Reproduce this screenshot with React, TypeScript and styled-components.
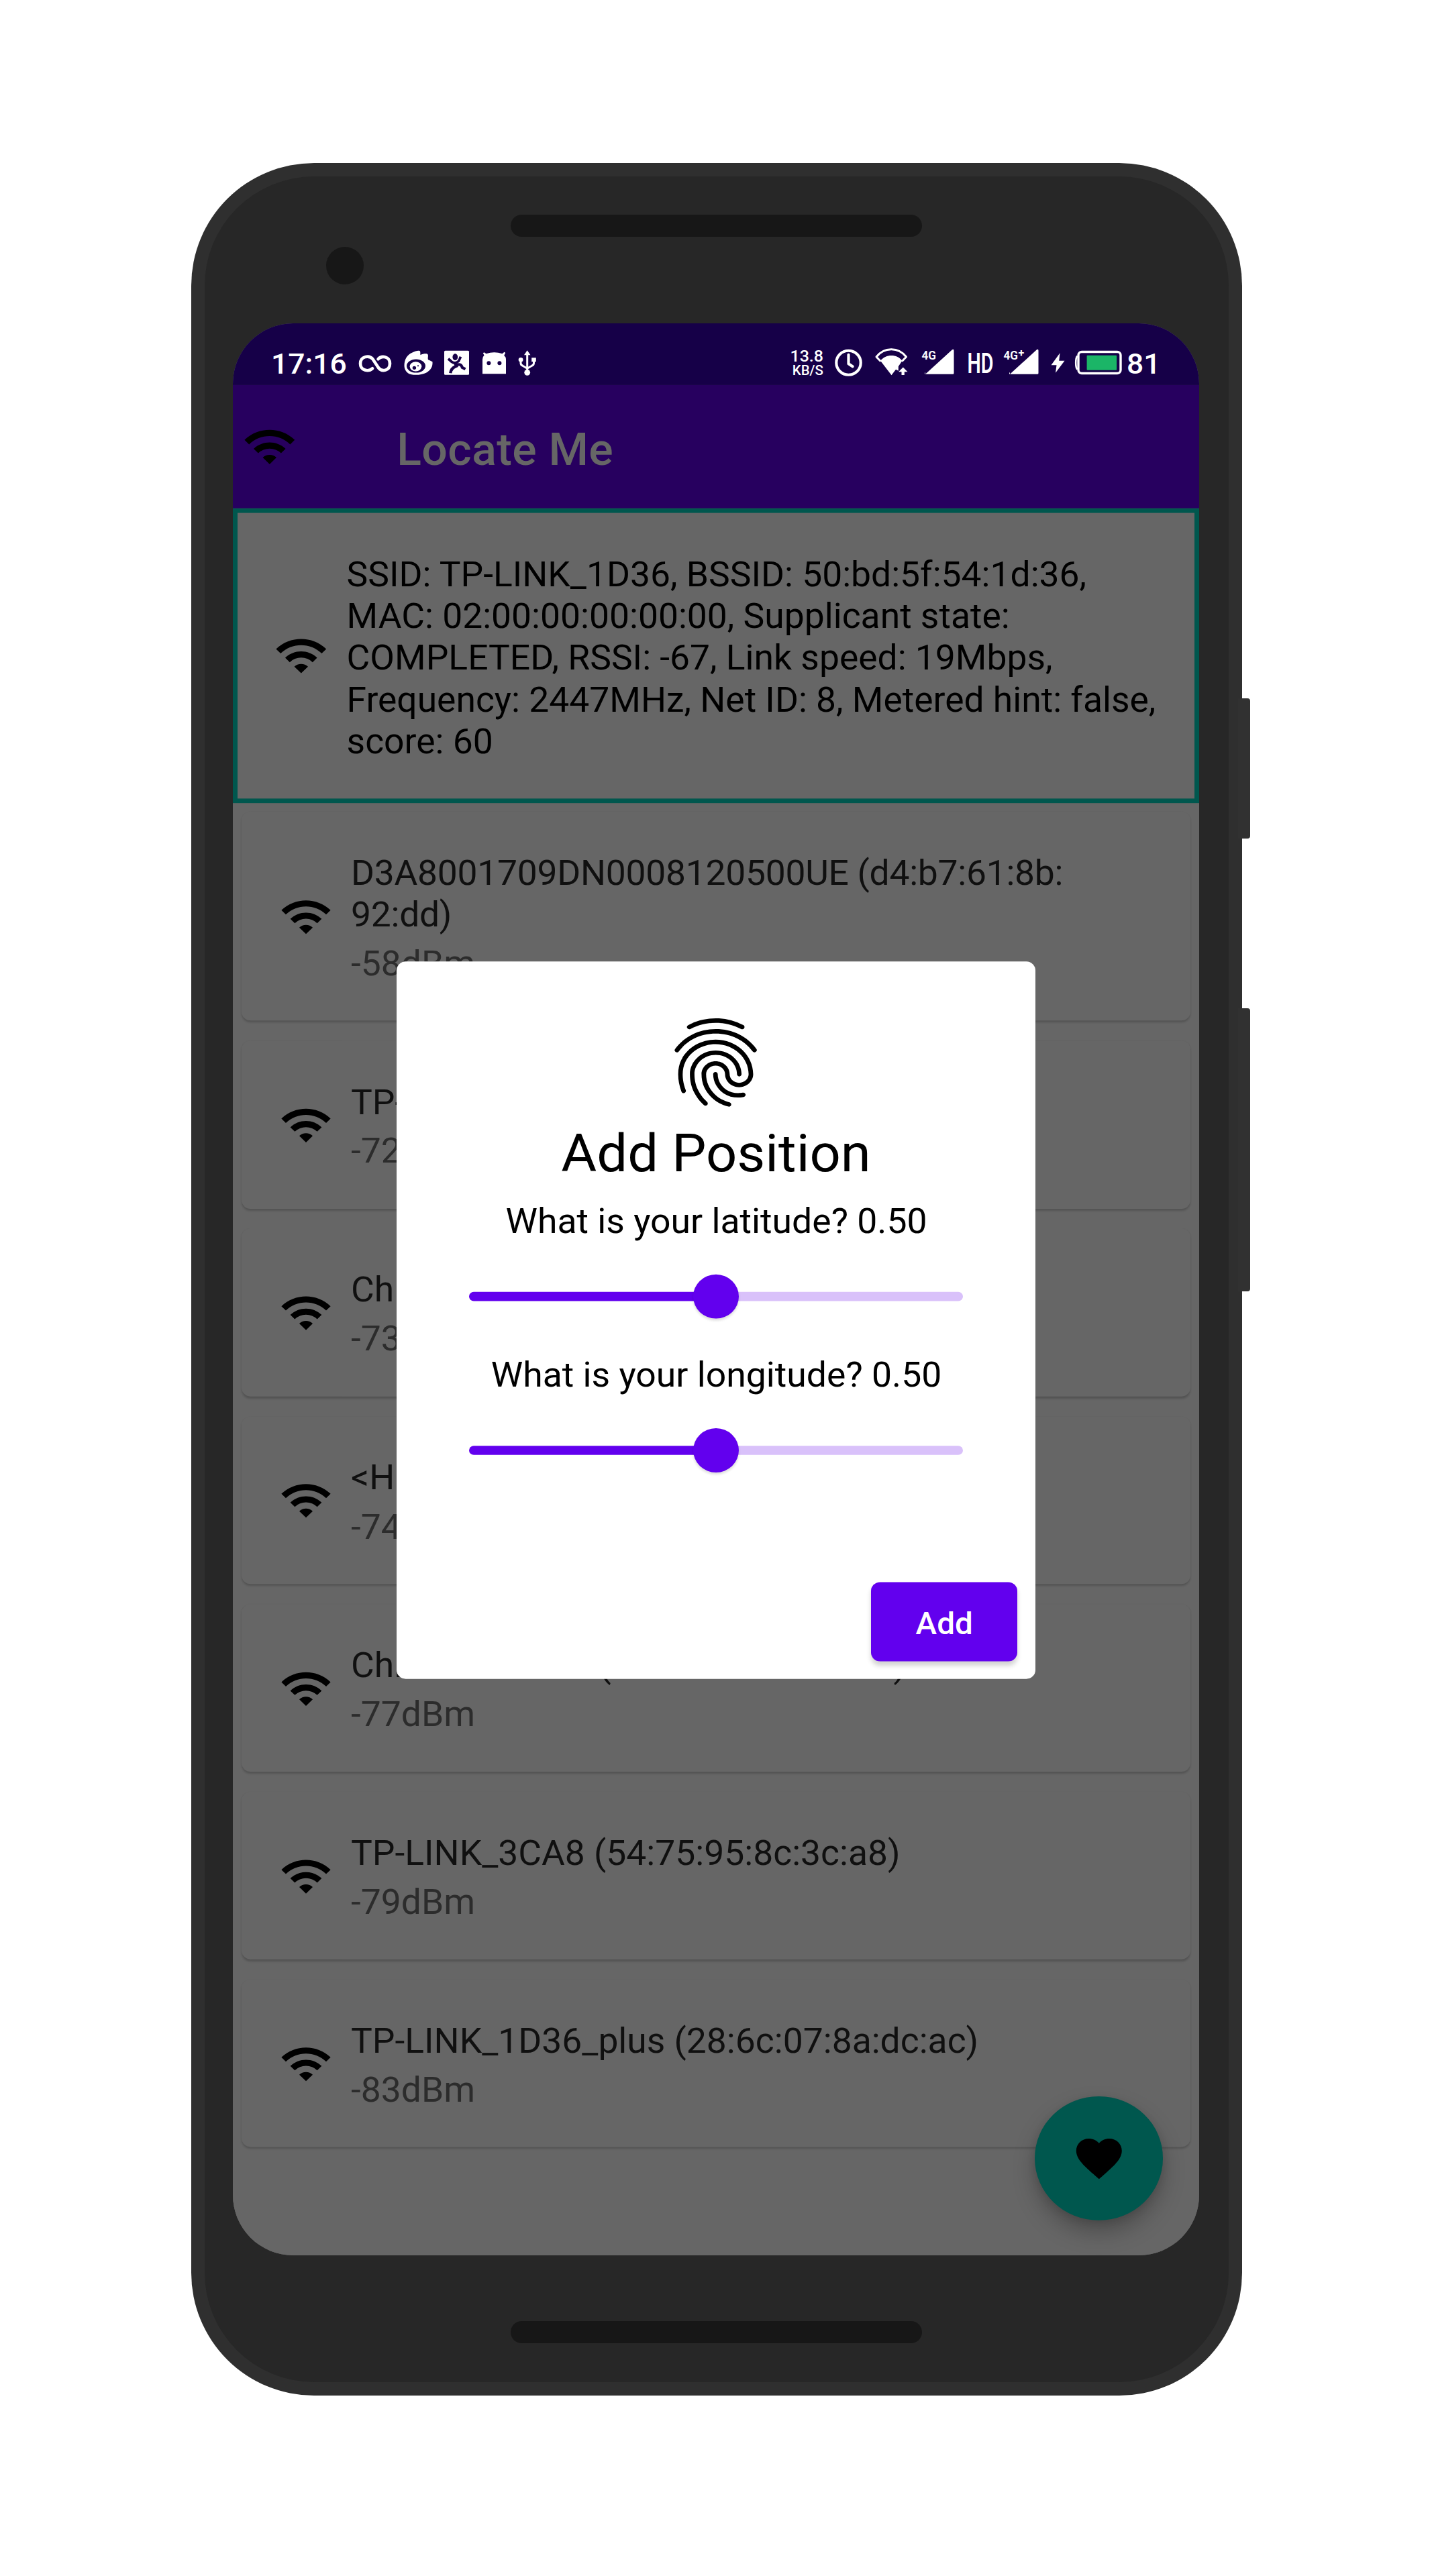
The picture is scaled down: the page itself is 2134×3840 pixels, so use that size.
import React from "react";
import styled, { createGlobalStyle } from "styled-components";
import { MdFavorite, MdFingerprint, MdWifi } from "react-icons/md";

const GlobalStyle = createGlobalStyle`
  *, *::before, *::after { box-sizing: border-box; }
  body {
    margin: 0;
    background: #ffffff;
    font-family: Roboto, "Noto Sans", sans-serif;
  }
`;

/* ---------- device ---------- */

const Page = styled.main`
  width: 2134px;
  height: 3840px;
  padding: 243px 283px 0 285px;
  background: #ffffff;
  overflow: hidden;
`;

const Phone = styled.div`
  position: relative;
  width: 1566px;
  height: 3328px;
  padding: 20px;
  border-radius: 183px;
  background: #2f2f2f;
`;

const SideButton = styled.span<{ $top: number; $height: number }>`
  position: absolute;
  left: 1560px;
  top: ${(p) => p.$top}px;
  width: 18px;
  height: ${(p) => p.$height}px;
  border-radius: 0 4px 4px 0;
  background: #313131;
`;

const Bezel = styled.div`
  position: relative;
  display: flex;
  flex-direction: column;
  align-items: center;
  width: 1526px;
  height: 3288px;
  padding: 57px 2px 0 0;
  border-radius: 163px;
  background: #272727;
`;

const Grille = styled.div`
  width: 613px;
  height: 33px;
  flex: none;
  border-radius: 17px;
  background: #171717;
`;

const Camera = styled.div`
  width: 56px;
  height: 56px;
  flex: none;
  align-self: flex-start;
  margin: 15px 0 58px 181px;
  border-radius: 50%;
  background: #171717;
`;

const Glass = styled.div`
  width: 1440px;
  height: 2880px;
  flex: none;
  margin-bottom: 98px;
  border-radius: 90px;
  overflow: hidden;
  background: #666666;
`;

/* The app is laid out at 1440 x 2976 and squeezed into the 1:2 glass. */
const Screen = styled.div`
  position: relative;
  display: flex;
  flex-direction: column;
  width: 1440px;
  height: 2976px;
  background: #666666;
  transform: scaleY(0.967742);
  transform-origin: 0 0;
`;

/* ---------- status bar ---------- */

const StatusBar = styled.div`
  display: flex;
  justify-content: space-between;
  height: 95px;
  flex: none;
  padding: 38px 63px 0 57px;
  background: #160048;
  color: #ffffff;
`;

const StatusGroup = styled.div`
  display: flex;
  align-items: flex-start;
`;

const StatusText = styled.span<{ $width: number; $gap?: number }>`
  width: ${(p) => p.$width}px;
  margin-left: ${(p) => p.$gap ?? 0}px;
  padding-top: 2px;
  font-size: 44.4px;
  line-height: 44px;
  font-weight: 500;
  white-space: nowrap;
`;

const Speed = styled.span`
  display: flex;
  flex-direction: column;
  align-items: flex-end;
  width: 50px;
  padding-top: 3px;
  font-size: 25px;
  line-height: 20px;
  font-weight: 500;
  white-space: nowrap;
`;

const SpeedUnit = styled.span`
  font-size: 20.5px;
  line-height: 24px;
`;

const Glyph = styled.svg<{ $gap: number }>`
  display: block;
  flex: none;
  height: 44px;
  margin-left: ${(p) => p.$gap}px;
  overflow: visible;
  font-family: Roboto, sans-serif;
`;

const BG = "#160048";

type GlyphProps = { w: number; gap: number; children: React.ReactNode };

const StatusIcon = ({ w, gap, children }: GlyphProps) => (
  <Glyph
    $gap={gap}
    width={w}
    height={44}
    viewBox={`0 0 ${w} 42.6`}
    preserveAspectRatio="none"
    fill="#fff"
  >
    {children}
  </Glyph>
);

const Signal = ({ w, gap, plus }: { w: number; gap: number; plus?: boolean }) => (
  <StatusIcon w={w} gap={gap}>
    <path d={`M${w - 43} 39 L${w - 3} 2.5 Q${w - 0.5} 1 ${w - 0.5} 4 V37.5 Q${w - 0.5} 39 ${w - 2} 39 H${w - 43} Q${w - 45} 38.5 ${w - 43} 36z`} />
    <text x="-0.5" y="17.3" fontSize="19" fontWeight="600" textLength="21.5" lengthAdjust="spacingAndGlyphs">
      4G
    </text>
    {plus && (
      <text x="21.5" y="13" fontSize="16" fontWeight="600">
        +
      </text>
    )}
  </StatusIcon>
);

/* ---------- app bar and header ---------- */

const AppBar = styled.header`
  display: flex;
  align-items: center;
  gap: 149px;
  height: 190px;
  flex: none;
  padding-left: 13.6px;
  background: #27005f;
  color: #000000;
`;

const Title = styled.h1`
  margin: 0;
  padding-top: 9px;
  color: #666666;
  font-size: 68px;
  line-height: 80px;
  font-weight: 500;
  letter-spacing: 0.4px;
`;

const Current = styled.section`
  display: flex;
  align-items: center;
  gap: 27px;
  height: 454px;
  flex: none;
  padding-left: 54px;
  border: 7px solid #00574e;
  color: #000000;
`;

const CurrentText = styled.p`
  margin: 7px 0 0;
  font-size: 53.4px;
  line-height: 64.1px;
  white-space: nowrap;
`;

/* ---------- network list ---------- */

const List = styled.div`
  display: flex;
  flex-direction: column;
  gap: 30.8px;
  padding: 13px 13px 0;
`;

const Card = styled.article`
  display: flex;
  align-items: center;
  gap: 27px;
  padding: 62.7px 0 56.4px 56px;
  border-radius: 13.6px;
  background: #666666;
  box-shadow: 0 2.5px 3px rgba(0, 0, 0, 0.18);
  color: #000000;

  > svg {
    flex: none;
    margin-bottom: 5px;
  }
`;

const CardText = styled.div`
  display: flex;
  flex-direction: column;
  gap: 11.3px;
  font-size: 53.4px;
  line-height: 64px;
  white-space: nowrap;
`;

const Ssid = styled.div<{ $tracking?: number }>`
  color: #101010;
  letter-spacing: ${(p) => p.$tracking ?? 0}px;
`;

const Level = styled.div`
  color: #2c2c2c;
`;

/* ---------- floating button and dialog ---------- */

const Fab = styled.button`
  position: absolute;
  right: 54.4px;
  bottom: 54.4px;
  display: grid;
  place-items: center;
  width: 190.4px;
  height: 190.4px;
  padding: 0;
  border: 0;
  border-radius: 50%;
  background: #00574e;
  color: #000000;
  box-shadow: 0 18px 34px rgba(0, 0, 0, 0.25), 0 4px 12px rgba(0, 0, 0, 0.1);
`;

const Dialog = styled.section`
  position: absolute;
  left: 244px;
  top: 982.7px;
  display: flex;
  flex-direction: column;
  align-items: center;
  width: 952px;
  height: 1105.7px;
  padding-top: 74px;
  border-radius: 13.6px;
  background: #ffffff;
  color: #000000;
`;

const DialogTitle = styled.h2`
  margin: 11px 0 0;
  font-size: 81.3px;
  line-height: 96px;
  font-weight: 400;
  white-space: nowrap;
`;

const Question = styled.label<{ $before: number }>`
  margin-top: ${(p) => p.$before}px;
  padding-left: 1px;
  font-size: 53.5px;
  line-height: 64px;
  white-space: nowrap;
`;

const Slider = styled.div`
  display: flex;
  align-items: center;
  width: 735.5px;
  height: 68px;
  margin-top: 50px;
`;

const Track = styled.span<{ $side: "on" | "off" }>`
  flex: 1;
  height: 13.6px;
  margin: ${(p) => (p.$side === "on" ? "0 -8px 0 0" : "0 0 0 -8px")};
  border-radius: ${(p) => (p.$side === "on" ? "7px 0 0 7px" : "0 7px 7px 0")};
  background: ${(p) => (p.$side === "on" ? "#6200ee" : "#d9c1fa")};
`;

const Thumb = styled.span`
  z-index: 1;
  width: 68px;
  height: 68px;
  flex: none;
  border-radius: 50%;
  background: #6200ee;
  box-shadow: 0 3px 4px rgba(0, 0, 0, 0.14);
`;

const AddButton = styled.button`
  align-self: flex-end;
  width: 217.6px;
  height: 122.4px;
  margin: auto 27px 27px 0;
  padding: 5px 0 0;
  border: 0;
  border-radius: 13.6px;
  background: #6200ee;
  color: #ffffff;
  font-family: inherit;
  font-size: 47.6px;
  font-weight: 500;
  box-shadow: 0 6px 8px rgba(0, 0, 0, 0.18);
`;

/* ---------- data ---------- */

const connection = [
  "SSID: TP-LINK_1D36, BSSID: 50:bd:5f:54:1d:36,",
  "MAC: 02:00:00:00:00:00, Supplicant state:",
  "COMPLETED, RSSI: -67, Link speed: 19Mbps,",
  "Frequency: 2447MHz, Net ID: 8, Metered hint: false,",
  "score: 60",
];

const networks = [
  { name: ["D3A8001709DN0008120500UE (d4:b7:61:8b:", "92:dd)"], level: "-58dBm", tracking: -0.27 },
  { name: ["TP-LINK"], level: "-72dBm" },
  { name: ["ChinaNet"], level: "-73dBm" },
  { name: ["<Hidden>"], level: "-74dBm" },
  { name: ["ChinaNet-d6Ck (d4:b7:61:8b:92:cc)"], level: "-77dBm" },
  { name: ["TP-LINK_3CA8 (54:75:95:8c:3c:a8)"], level: "-79dBm" },
  { name: ["TP-LINK_1D36_plus (28:6c:07:8a:dc:ac)"], level: "-83dBm" },
];

const Lines = ({ lines }: { lines: string[] }) => (
  <>
    {lines.map((line, i) => (
      <React.Fragment key={line}>
        {i > 0 && <br />}
        {line}
      </React.Fragment>
    ))}
  </>
);

const RangeSlider = () => (
  <Slider>
    <Track $side="on" />
    <Thumb />
    <Track $side="off" />
  </Slider>
);

const StatusRow = () => (
  <StatusBar>
    <StatusGroup>
      <StatusText $width={112}>17:16</StatusText>
      <StatusIcon w={50} gap={18}>
        <path
          d="M21 30.5 C15 36 3 33.5 3 23.2 C3 12.5 16 10 21.5 16.5 L30 29.5 C35.5 36.5 47 33.5 47 23.2 C47 12.5 35 10.5 29.5 16.5"
          fill="none"
          stroke="#fff"
          strokeWidth="4.6"
          strokeLinecap="round"
        />
      </StatusIcon>
      <StatusIcon w={43} gap={18}>
        <path d="M0.5 27 C0.3 17 5 10 12 7 C17 4.5 21 3.5 23.5 4.3 C25 5.5 24 8.5 24.5 10.5 C28 8.5 33 8 35 9 C37 11 35 14 36 17.5 C39 18.5 40 19.5 42.5 20.5 C43 28 40 33 33 37 C26 40.5 12 41.5 6 37.5 C2.5 35 0.7 31 0.5 27z" />
        <ellipse cx="18" cy="26.8" rx="14" ry="10" fill={BG} />
        <ellipse cx="17.5" cy="27.6" rx="8.8" ry="7.2" />
        <circle cx="15.4" cy="29.6" r="2.7" fill={BG} />
        <circle cx="21" cy="26.6" r="1.1" fill={BG} />
      </StatusIcon>
      <StatusIcon w={37} gap={17}>
        <rect x="0" y="4" width="37" height="36" rx="1.5" />
        <g fill="none" stroke={BG} strokeWidth="3.8">
          <path d="M6 16 L11 20.5 Q16.5 24.5 21.5 19.5 L24.5 13" />
          <path d="M16 22 L18 27 Q10 30 9.3 37.5" strokeWidth="4.4" />
          <path d="M16.5 26 Q25 22 26.8 29 L31.5 31.5" strokeWidth="4.2" />
        </g>
        <ellipse cx="16.3" cy="13.4" rx="4.6" ry="5.6" fill={BG} stroke="#fff" strokeWidth="1.4" />
      </StatusIcon>
      <StatusIcon w={37} gap={19}>
        <path d="M1 38.5 V17 Q1 13 3.5 11 L1.8 7.5 L3.5 6.5 L6.5 8.5 Q18.5 4.5 30.5 8.5 L33.5 6 L35.2 7.3 L33.2 11 Q36 13.5 36 17 V38.5z" />
        <circle cx="10.4" cy="22.6" r="3" fill={BG} />
        <circle cx="26.4" cy="22.6" r="3" fill={BG} />
      </StatusIcon>
      <StatusIcon w={27} gap={18}>
        <path d="M12.7 3.5 L17.5 10.5 H8z" />
        <path
          d="M12.7 8 V37 M3 17 V22.5 Q3 25.5 6 26.5 L12.7 30.5 M22.5 17 V22.5 Q22.5 25.5 19.5 26.5 L12.7 30.5"
          fill="none"
          stroke="#fff"
          strokeWidth="3"
        />
        <rect x="19.2" y="14.5" width="6.6" height="6" />
        <ellipse cx="3.1" cy="17.5" rx="3.4" ry="3.2" />
        <circle cx="12.7" cy="36.6" r="4.4" />
      </StatusIcon>
    </StatusGroup>
    <StatusGroup>
      <Speed>
        13.8<SpeedUnit>KB/S</SpeedUnit>
      </Speed>
      <StatusIcon w={41} gap={17}>
        <ellipse cx="20.5" cy="22" rx="18.2" ry="18" fill="none" stroke="#fff" strokeWidth="4.2" />
        <path d="M20.5 10 V23.5 L26.5 27.5" fill="none" stroke="#fff" strokeWidth="4.2" strokeLinejoin="round" strokeLinecap="round" />
      </StatusIcon>
      <StatusIcon w={50} gap={19}>
        <path d="M8.5 20 L2 13.2 C13.5 -1.8 35 -1.8 46.5 13.2 L40 20" fill="none" stroke="#fff" strokeWidth="3" strokeLinejoin="round" />
        <path d="M8 19 C16 8.5 33 8.5 40.5 19 L34.8 27.5 V34 L31 32 L24.5 40.5z" />
        <path d="M41.8 28.8 L48.5 35.5 H43.8 V40.3 H39.5 V35.5 H35z" />
      </StatusIcon>
      <Signal w={48} gap={20} />
      <StatusIcon w={38} gap={20}>
        <text x="-0.5" y="37" fontSize="42" fontWeight="600" textLength="39" lengthAdjust="spacingAndGlyphs">
          HD
        </text>
      </StatusIcon>
      <Signal w={52} gap={16} plus />
      <StatusIcon w={21} gap={18}>
        <path d="M13.5 7.5 L0.5 25.5 H8.5 L7 37 L20.5 19 H12.2z" />
      </StatusIcon>
      <StatusIcon w={70} gap={15}>
        <rect x="5" y="5.8" width="63" height="32" rx="5" fill="none" stroke="#fff" strokeWidth="3.4" />
        <path d="M3.5 12 Q1.2 14 1.2 22 Q1.2 30 3.5 32" fill="none" stroke="#fff" strokeWidth="2.6" />
        <rect x="17.6" y="11" width="44.5" height="22" rx="1" fill="#1bb567" />
      </StatusIcon>
      <StatusText $width={45} $gap={7}>
        81
      </StatusText>
    </StatusGroup>
  </StatusBar>
);

export default function App() {
  return (
    <>
      <GlobalStyle />
      <Page>
        <Phone>
          <SideButton $top={798} $height={209} />
          <SideButton $top={1260} $height={422} />
          <Bezel>
            <Grille />
            <Camera />
            <Glass>
              <Screen>
                <StatusRow />
                <AppBar>
                  <MdWifi size={81.6} />
                  <Title>Locate Me</Title>
                </AppBar>
                <Current>
                  <MdWifi size={81.6} />
                  <CurrentText>
                    <Lines lines={connection} />
                  </CurrentText>
                </Current>
                <List>
                  {networks.map((n) => (
                    <Card key={n.level}>
                      <MdWifi size={80} />
                      <CardText>
                        <Ssid $tracking={n.tracking}>
                          <Lines lines={n.name} />
                        </Ssid>
                        <Level>{n.level}</Level>
                      </CardText>
                    </Card>
                  ))}
                </List>
                <Fab aria-label="Favorite">
                  <MdFavorite size={81.6} />
                </Fab>
                <Dialog>
                  <MdFingerprint size={163.2} />
                  <DialogTitle>Add Position</DialogTitle>
                  <Question $before={24}>What is your latitude? 0.50</Question>
                  <RangeSlider />
                  <Question $before={55}>What is your longitude? 0.50</Question>
                  <RangeSlider />
                  <AddButton>Add</AddButton>
                </Dialog>
              </Screen>
            </Glass>
            <Grille />
          </Bezel>
        </Phone>
      </Page>
    </>
  );
}
